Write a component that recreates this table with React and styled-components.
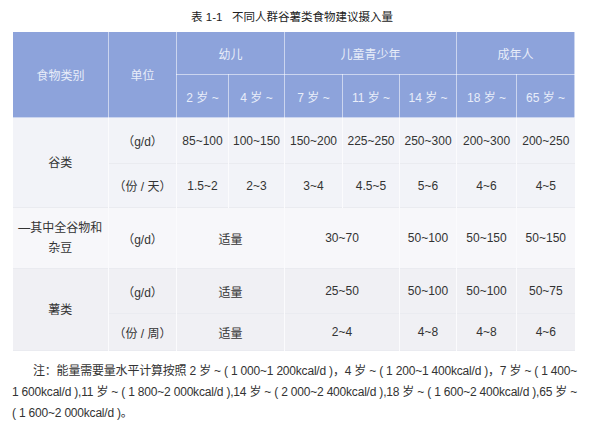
import React from 'react';
import styled, { createGlobalStyle } from 'styled-components';

const GlobalStyle = createGlobalStyle`
    body {
        margin: 0;
        background: #ffffff;
        font-family: "Liberation Sans", "Noto Sans CJK SC", sans-serif;
        color: #333;
    }
`;

const widths = [96, 68, 52, 56, 58, 57, 57, 60, 58];

const rows = [
    { band: 'a', height: 46, label: '谷类', labelSpan: 2, unit: '（g/d）', cells: [['85~100'], ['100~150'], ['150~200'], ['225~250'], ['250~300'], ['200~300'], ['200~250']] },
    { band: 'a', height: 44, unit: '（份 / 天）', cells: [['1.5~2'], ['2~3'], ['3~4'], ['4.5~5'], ['5~6'], ['4~6'], ['4~5']] },
    { band: 'b', height: 61, label: ['—其中全谷物和', '杂豆'], labelSpan: 1, unit: '（g/d）', cells: [['适量', 2], ['30~70', 2], ['50~100'], ['50~150'], ['50~150']] },
    { band: 'c', height: 45, label: '薯类', labelSpan: 2, unit: '（g/d）', cells: [['适量', 2], ['25~50', 2], ['50~100'], ['50~100'], ['50~75']] },
    { band: 'c', height: 37, unit: '（份 / 周）', cells: [['适量', 2], ['2~4', 2], ['4~8'], ['4~8'], ['4~6']] },
];

const App = () => {
    return (
        <Page>
            <GlobalStyle />
            <Caption>表 1-1&nbsp;&nbsp;&nbsp;不同人群谷薯类食物建议摄入量</Caption>
            <Table>
                <colgroup>
                    {widths.map((w, i) => (
                        <col key={i} style={{ width: w }} />
                    ))}
                </colgroup>
                <thead>
                    <HeadRow>
                        <Th rowSpan={2}>食物类别</Th>
                        <Th rowSpan={2}>单位</Th>
                        <Th colSpan={2}>幼儿</Th>
                        <Th colSpan={3}>儿童青少年</Th>
                        <Th colSpan={2}>成年人</Th>
                    </HeadRow>
                    <HeadRow>
                        <Th>2 岁 ~</Th>
                        <Th>4 岁 ~</Th>
                        <Th>7 岁 ~</Th>
                        <Th>11 岁 ~</Th>
                        <Th>14 岁 ~</Th>
                        <Th>18 岁 ~</Th>
                        <Th>65 岁 ~</Th>
                    </HeadRow>
                </thead>
                <tbody>
                    {rows.map((row, r) => (
                        <BodyRow key={r} $band={row.band} style={{ height: row.height }}>
                            {row.label && (
                                <LabelCell rowSpan={row.labelSpan}>
                                    {Array.isArray(row.label)
                                        ? row.label.map((l, i) => <LabelLine key={i}>{l}</LabelLine>)
                                        : row.label}
                                </LabelCell>
                            )}
                            <Td>{row.unit}</Td>
                            {row.cells.map(([text, span], c) => (
                                <Td key={c} colSpan={span || 1}>{text}</Td>
                            ))}
                        </BodyRow>
                    ))}
                </tbody>
            </Table>
            <Note>
                <NoteLine $indent $justify>注：能量需要量水平计算按照 2 岁 ~ ( 1 000~1 200kcal/d )，4 岁 ~ ( 1 200~1 400kcal/d )，7 岁 ~ ( 1 400~</NoteLine>
                <NoteLine $justify>1 600kcal/d ),11 岁 ~ ( 1 800~2 000kcal/d ),14 岁 ~ ( 2 000~2 400kcal/d ),18 岁 ~ ( 1 600~2 400kcal/d ),65 岁 ~</NoteLine>
                <NoteLine>( 1 600~2 000kcal/d )。</NoteLine>
            </Note>
        </Page>
    );
};

export default App;

const Page = styled.div`
    width: 600px;
    height: 428px;
    overflow: hidden;
`;

const Caption = styled.div`
    padding-top: 10px;
    height: 22px;
    box-sizing: border-box;
    text-align: center;
    font-size: 11.5px;
    line-height: 14px;
    color: #222;
    margin-left: -16px;
`;

const Table = styled.table`
    margin: 9px 0 0 12px;
    width: 562px;
    table-layout: fixed;
    border-collapse: collapse;
    font-size: 12px;
`;

const HeadRow = styled.tr`
    height: 43px;
    background: #8da3db;
`;

const Th = styled.th`
    font-weight: normal;
    color: #e8edf9;
    font-size: 12px;
    text-align: center;
    vertical-align: middle;
    border: 1px solid rgba(255, 255, 255, 0.55);
    padding: 0;
    white-space: nowrap;
`;

const bandColors = {
    a: '#f2f3f8',
    b: '#f7f7fa',
    c: '#f0f0f4',
};

const BodyRow = styled.tr`
    background: ${(p) => bandColors[p.$band]};
    border-bottom: 1px solid #eaebf0;
`;

const Td = styled.td`
    text-align: center;
    vertical-align: middle;
    color: #333;
    padding: 0;
    white-space: nowrap;
    border-left: 1px solid #fbfbfd;
`;

const LabelCell = styled(Td)`
    border-left: none;
    line-height: 20px;
`;

const LabelLine = styled.div``;

const Note = styled.div`
    margin: 10px 0 0 12px;
    width: 563px;
    font-size: 12px;
    line-height: 21px;
    color: #333;
`;

const NoteLine = styled.div`
    white-space: nowrap;
    text-indent: ${(p) => (p.$indent ? '21px' : '0')};
    text-align: ${(p) => (p.$justify ? 'justify' : 'left')};
    text-align-last: ${(p) => (p.$justify ? 'justify' : 'auto')};
    letter-spacing: -0.2px;
`;
